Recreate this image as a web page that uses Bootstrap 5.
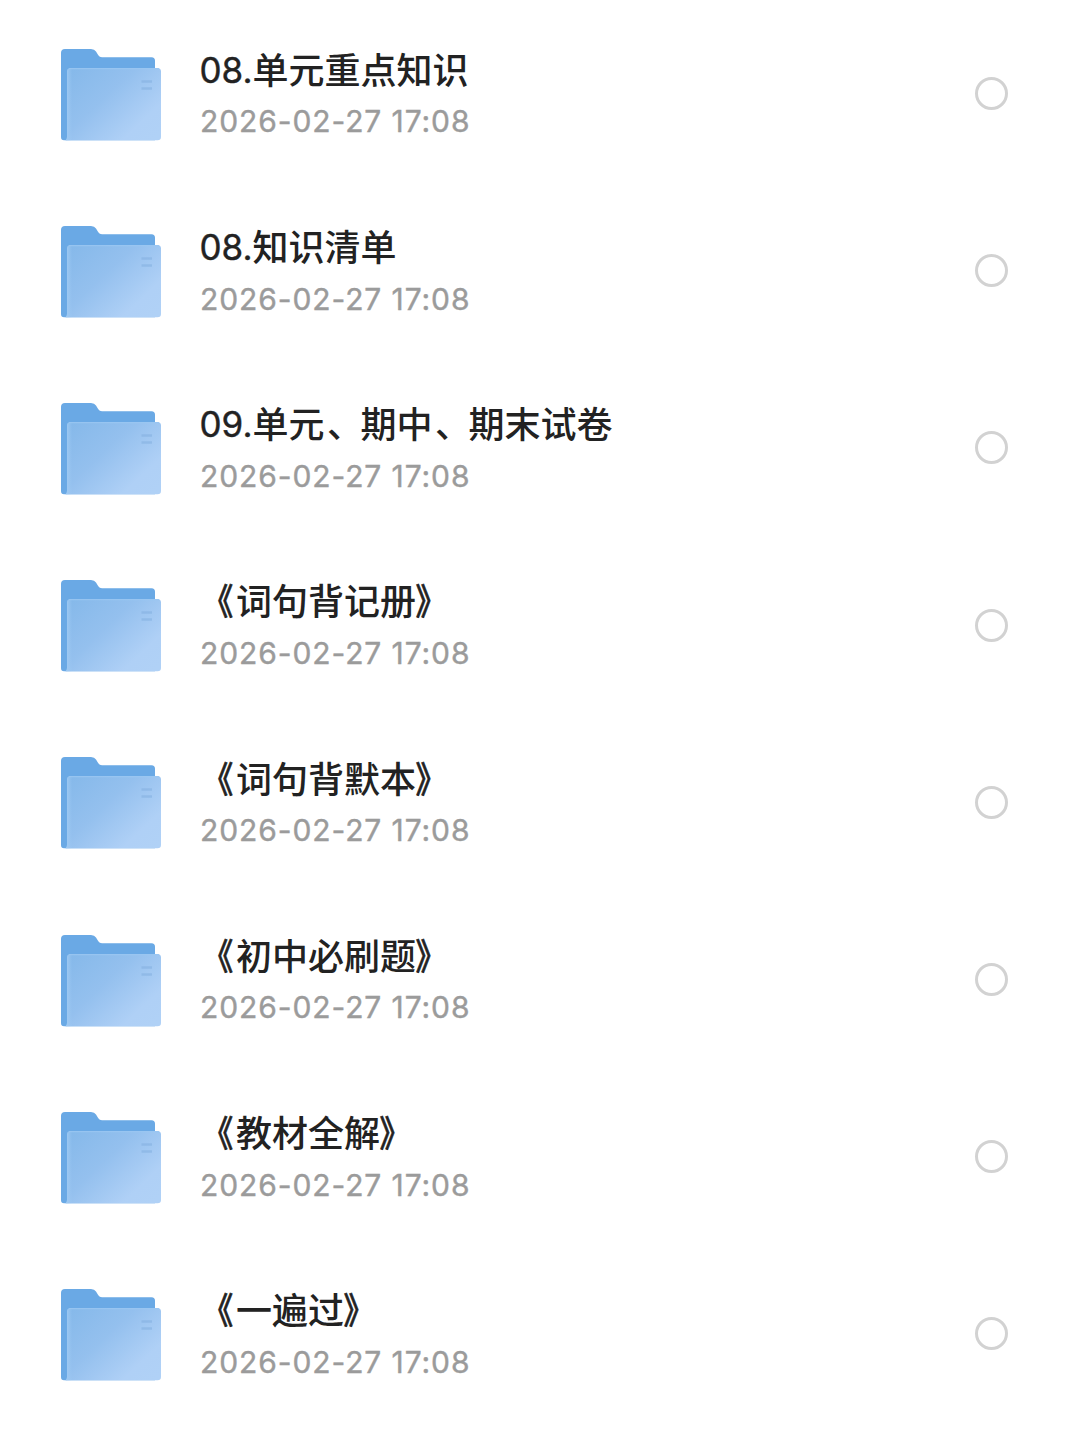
<!DOCTYPE html>
<html lang="zh-CN">
<head>
<meta charset="utf-8">
<meta name="viewport" content="width=device-width, initial-scale=1">
<title>文件列表</title>
<link href="https://cdn.jsdelivr.net/npm/bootstrap@5.3.0/dist/css/bootstrap.min.css" rel="stylesheet">
<style>
body{background:#fff;font-family:Inter,"Noto Sans CJK SC",sans-serif;overflow:hidden}
.file-list{padding-top:5px}
.file-row{height:177.2px;padding:0 72px 0 60px}
.folder-icon{width:102px;height:94px;margin-top:2px}
.file-text{margin-left:38px}
.file-name{font-size:36px;line-height:50px;font-weight:500;color:#222;white-space:nowrap}
.file-num{font-size:35px;font-weight:400;-webkit-text-stroke:.4px #222;letter-spacing:0;vertical-align:1px;line-height:1;margin-left:-.5px}
.file-open,.file-close{display:inline-block;line-height:1;transform:scaleX(.86);-webkit-text-stroke:.7px #222}
.file-open{transform-origin:44% 50%}
.file-close{transform-origin:-10% 50%}
.file-comma{display:inline-block;line-height:1;transform:translateX(2.5px)}
.file-date{font-size:30px;line-height:40px;margin-top:5.6px;color:#9b9b9b;-webkit-text-stroke:.4px #9b9b9b;letter-spacing:.9px;white-space:nowrap}
.file-check{appearance:none;width:33px;height:33px;border:3px solid #d2d2d2;border-radius:50%;margin:0}
</style>
<script src="https://cdn.jsdelivr.net/npm/bootstrap@5.3.0/dist/js/bootstrap.bundle.min.js"></script>
</head>
<body>
<svg width="0" height="0" class="position-absolute" aria-hidden="true">
<defs>
<linearGradient id="front" x1="0" y1="0.1" x2="1" y2="0.9"><stop offset="0" stop-color="#86b9ea"/><stop offset=".4" stop-color="#94c0ee"/><stop offset=".8" stop-color="#afd0f6"/><stop offset="1" stop-color="#b0d1f6"/></linearGradient>
<linearGradient id="edge" gradientUnits="userSpaceOnUse" x1="6" y1="0" x2="12" y2="0"><stop offset="0" stop-color="#9fcaf3"/><stop offset="1" stop-color="#9fcaf3" stop-opacity="0"/></linearGradient>
<symbol id="folder" viewBox="0 0 102 94">
<path d="M1 5Q1 1 5 1H31Q34.500 1 36 3.500L38.300 7.300Q39.500 9.300 42 9.300H91.500Q95 9.300 95 12.800V92.300H4Q1 92.300 1 89Z" fill="#6aa9e5"/>
<path d="M7 23.500Q7 20 10.500 20H97.500Q101 20 101 23.500V89Q101 92.300 97.500 92.300H5.500Q7 91.500 7 89Z" fill="url(#front)"/>
<path d="M7 23.500Q7 20 10.500 20H12V92.300H5.500Q7 91.500 7 89Z" fill="url(#edge)"/>
<path d="M9 20.700H99" stroke="#9bc7f2" stroke-width="1"/>
<path d="M81.500 33.500H92M81.500 40.500H92" stroke="#86b2e2" stroke-width="2.400" opacity=".6"/>
</symbol>
</defs>
</svg>
<main class="file-list" id="files"></main>
<script>
const files=[["08.","单元重点知识"],["08.","知识清单"],["09.","单元、期中、期末试卷"],["","《词句背记册》"],["","《词句背默本》"],["","《初中必刷题》"],["","《教材全解》"],["","《一遍过》"]];
const marks={"《":"file-open","》":"file-close","、":"file-comma"};
document.getElementById("files").innerHTML=files.map(([n,t])=>`<div class="file-row d-flex align-items-center">
<svg class="folder-icon flex-shrink-0"><use href="#folder"/></svg>
<div class="file-text flex-grow-1"><div class="file-name">${n?`<span class="file-num">${n}</span>`:""}${t.replace(/[《》、]/g,c=>`<span class="${marks[c]}">${c}</span>`)}</div><div class="file-date">2026-02-27 17:08</div></div>
<input type="checkbox" class="file-check flex-shrink-0" aria-label="${n}${t}">
</div>`).join("");
</script>
</body>
</html>
